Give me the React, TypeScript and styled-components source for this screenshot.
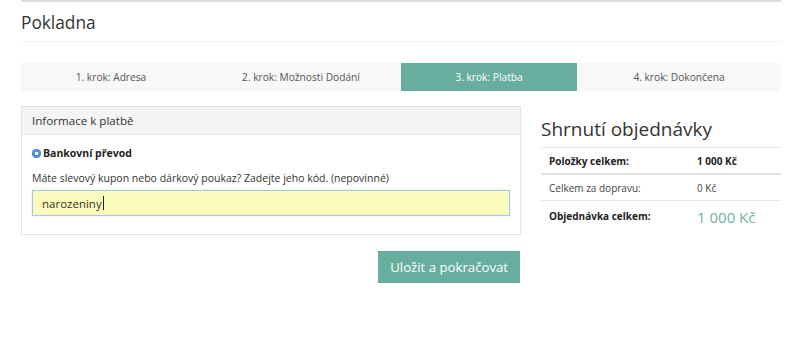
import React from 'react';
import styled, { createGlobalStyle } from 'styled-components';

const GlobalStyle = createGlobalStyle`
  body {
    margin: 0;
    background: #fff;
    font-family: "Open Sans", "Liberation Sans", sans-serif;
    color: #333;
  }
`;

const Page = styled.div`
  width: 760px;
  margin-left: 21px;
  border-top: 2px solid #dedede;
`;

const Title = styled.h1`
  margin: 0;
  padding: 11px 0 8px;
  font-size: 17.3px;
  font-weight: 400;
  line-height: 20px;
  color: #333;
  border-bottom: 1px solid #f0f0f0;
`;

const Steps = styled.div`
  display: grid;
  grid-template-columns: 180px 200px 176px 204px;
  margin-top: 21px;
  background: #f8f8f8;
`;

const Step = styled.div<{ $active?: boolean }>`
  height: 28px;
  display: flex;
  align-items: center;
  justify-content: center;
  font-size: 10.2px;
  color: ${p => (p.$active ? '#fff' : '#555')};
  background: ${p => (p.$active ? '#67ae9f' : 'transparent')};
`;

const Main = styled.div`
  display: grid;
  grid-template-columns: 500px 240px;
  gap: 20px;
  margin-top: 15px;
`;

const LeftColumn = styled.div`
  display: flex;
  flex-direction: column;
  align-items: flex-end;
`;

const Panel = styled.div`
  width: 100%;
  box-sizing: border-box;
  border: 1px solid #e2e2e2;
`;

const PanelHeader = styled.div`
  height: 27px;
  display: flex;
  align-items: center;
  padding: 0 10px;
  background: #f4f4f4;
  border-bottom: 1px solid #e4e4e4;
  font-size: 11.6px;
  color: #333;
`;

const PanelBody = styled.div`
  padding: 11px 10px 18px;
`;

const RadioRow = styled.label`
  display: flex;
  align-items: center;
  gap: 2px;
  font-size: 10.5px;
  font-weight: 700;
  color: #222;
`;

const Radio = styled.span`
  width: 9px;
  height: 9px;
  border-radius: 50%;
  background: radial-gradient(circle, #fff 0 1.6px, #4f93e6 2px);
  box-shadow: inset 0 0 0 0.5px #3a7fd8;
`;

const FieldLabel = styled.div`
  margin-top: 11px;
  font-size: 10.5px;
  color: #333;
`;

const Field = styled.div`
  margin-top: 5px;
  height: 24px;
  display: flex;
  align-items: center;
  padding: 0 9px;
  background: #fbfbbc;
  border: 1px solid #a9c6ea;
  box-shadow: 0 0 1px #b8d4f2;
  font-size: 11.5px;
  color: #333;
`;

const Caret = styled.span`
  width: 1px;
  height: 14px;
  margin-left: 1px;
  background: #222;
`;

const SubmitButton = styled.button`
  margin-top: 16px;
  margin-right: 1px;
  height: 32px;
  padding: 0 12px;
  border: 0;
  background: #67ae9f;
  color: #fff;
  font-family: "Open Sans", "Liberation Sans", sans-serif;
  font-size: 13.2px;
`;

const SummaryTitle = styled.h2`
  margin: 12px 0 7px;
  font-size: 19px;
  font-weight: 400;
  line-height: 22px;
  color: #333;
`;

const SummaryTable = styled.div`
  border-top: 1px solid #e3e3e3;
`;

const Row = styled.div<{ $thick?: boolean; $last?: boolean }>`
  display: grid;
  grid-template-columns: 148px 1fr;
  align-items: center;
  height: ${p => (p.$last ? 30 : 25)}px;
  padding-left: 8px;
  border-bottom: ${p => (p.$last ? 'none' : p.$thick ? '2px solid #e3e3e3' : '1px solid #e6e6e6')};
`;

const Cell = styled.div<{ $bold?: boolean; $big?: boolean }>`
  font-size: ${p => (p.$big ? '15px' : '10px')};
  font-weight: ${p => (p.$bold ? 700 : 400)};
  color: ${p => (p.$big ? '#6db3a5' : p.$bold ? '#222' : '#444')};
  margin-top: ${p => (p.$big ? '2px' : '0')};
`;

const steps = ['1. krok: Adresa', '2. krok: Možnosti Dodání', '3. krok: Platba', '4. krok: Dokončena'];

const App: React.FC = () => (
  <>
    <GlobalStyle />
    <Page>
      <Title>Pokladna</Title>
      <Steps>
        {steps.map((s, i) => (
          <Step key={s} $active={i === 2}>{s}</Step>
        ))}
      </Steps>
      <Main>
        <LeftColumn>
          <Panel>
            <PanelHeader>Informace k platbě</PanelHeader>
            <PanelBody>
              <RadioRow>
                <Radio />
                Bankovní převod
              </RadioRow>
              <FieldLabel>Máte slevový kupon nebo dárkový poukaz? Zadejte jeho kód. (nepovinné)</FieldLabel>
              <Field>
                narozeniny
                <Caret />
              </Field>
            </PanelBody>
          </Panel>
          <SubmitButton>Uložit a pokračovat</SubmitButton>
        </LeftColumn>
        <div>
          <SummaryTitle>Shrnutí objednávky</SummaryTitle>
          <SummaryTable>
            <Row $thick>
              <Cell $bold>Položky celkem:</Cell>
              <Cell $bold>1 000 Kč</Cell>
            </Row>
            <Row>
              <Cell>Celkem za dopravu:</Cell>
              <Cell>0 Kč</Cell>
            </Row>
            <Row $last>
              <Cell $bold>Objednávka celkem:</Cell>
              <Cell $big>1 000 Kč</Cell>
            </Row>
          </SummaryTable>
        </div>
      </Main>
    </Page>
  </>
);

export default App;
